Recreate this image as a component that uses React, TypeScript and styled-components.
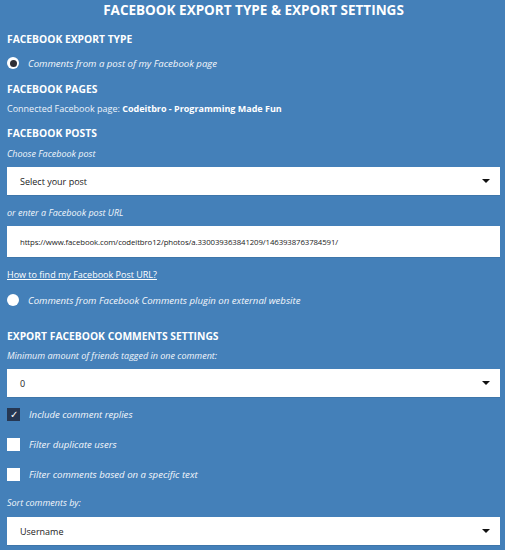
import styled, { createGlobalStyle } from "styled-components";

const GlobalStyle = createGlobalStyle`
	body {
		margin: 0;
		background: #4480b9;
		font-family: "Open Sans", "Noto Sans", sans-serif;
		color: #ffffff;
	}
`;

const Page = styled.div`
	width: 505px;
	height: 550px;
	box-sizing: border-box;
	padding: 0 5px 0 7px;
	background: #4480b9;
	overflow: hidden;
`;

const Title = styled.h1`
	margin: 0;
	height: 21px;
	text-align: center;
	font-size: 13.5px;
	font-weight: 700;
	line-height: 20px;
`;

const SectionTitle = styled.h2<{ $top?: number }>`
	margin: ${(p) => p.$top ?? 0}px 0 0;
	font-size: 10.3px;
	font-weight: 700;
	line-height: 16px;
`;

const Hint = styled.div<{ $top?: number }>`
	margin: ${(p) => p.$top ?? 0}px 0 0;
	font-size: 9px;
	font-style: italic;
	line-height: 16px;
	color: #f2f6fb;
`;

const Text = styled.div`
	margin-top: 4px;
	font-size: 9px;
	line-height: 16px;
	color: #eef3f9;

	b {
		color: #ffffff;
		font-weight: 700;
	}
`;

const OptionRow = styled.label<{ $top?: number }>`
	display: flex;
	align-items: center;
	gap: 9px;
	height: 16px;
	margin-top: ${(p) => p.$top ?? 0}px;
	font-size: 9.6px;
	font-style: italic;
	color: #f4f7fb;
`;

const Radio = styled.span<{ $checked?: boolean }>`
	width: 12px;
	height: 12px;
	border-radius: 50%;
	background: #ffffff;
	display: flex;
	align-items: center;
	justify-content: center;
	flex: 0 0 auto;

	&::after {
		content: "";
		display: ${(p) => (p.$checked ? "block" : "none")};
		width: 7px;
		height: 7px;
		border-radius: 50%;
		background: #2e2e35;
	}
`;

const Box = styled.span<{ $checked?: boolean }>`
	width: 13px;
	height: 13px;
	box-sizing: border-box;
	background: ${(p) => (p.$checked ? "#263752" : "#ffffff")};
	display: flex;
	align-items: center;
	justify-content: center;
	flex: 0 0 auto;
	color: #ffffff;
	font-size: 10px;
	font-style: normal;
`;

const Field = styled.div<{ $top?: number; $height?: number }>`
	display: flex;
	align-items: center;
	justify-content: space-between;
	height: ${(p) => p.$height ?? 28}px;
	margin-top: ${(p) => p.$top ?? 0}px;
	padding: 0 10px 0 13px;
	background: #ffffff;
	color: #222222;
	font-size: 9px;
	box-shadow: 0 1px 0 rgba(0, 0, 0, 0.08);
`;

const UrlText = styled.span`
	font-size: 7.8px;
	letter-spacing: -0.1px;
`;

const Caret = styled.span`
	width: 0;
	height: 0;
	border-left: 4px solid transparent;
	border-right: 4px solid transparent;
	border-top: 4px solid #111111;
`;

const HelpLink = styled.a`
	display: block;
	margin-top: 10px;
	font-size: 9px;
	line-height: 16px;
	color: #ffffff;
	text-decoration: underline;
`;

function Select({ value, top }: { value: string; top?: number }) {
	return (
		<Field $top={top}>
			<span>{value}</span>
			<Caret />
		</Field>
	);
}

export default function App() {
	return (
		<Page>
			<GlobalStyle />
			<Title>FACEBOOK EXPORT TYPE &amp; EXPORT SETTINGS</Title>

			<SectionTitle $top={10}>FACEBOOK EXPORT TYPE</SectionTitle>
			<OptionRow $top={8}>
				<Radio $checked />
				Comments from a post of my Facebook page
			</OptionRow>

			<SectionTitle $top={10}>FACEBOOK PAGES</SectionTitle>
			<Text>
				Connected Facebook page: <b>Codeitbro - Programming Made Fun</b>
			</Text>

			<SectionTitle $top={8}>FACEBOOK POSTS</SectionTitle>
			<Hint $top={5}>Choose Facebook post</Hint>
			<Select value="Select your post" top={5} />

			<Hint $top={10}>or enter a Facebook post URL</Hint>
			<Field $top={5} $height={31}>
				<UrlText>https://www.facebook.com/codeitbro12/photos/a.330039363841209/1463938763784591/</UrlText>
			</Field>

			<HelpLink href="#">How to find my Facebook Post URL?</HelpLink>
			<OptionRow $top={9}>
				<Radio />
				Comments from Facebook Comments plugin on external website
			</OptionRow>

			<SectionTitle $top={20}>EXPORT FACEBOOK COMMENTS SETTINGS</SectionTitle>
			<Hint $top={4}>Minimum amount of friends tagged in one comment:</Hint>
			<Select value="0" top={5} />

			<OptionRow $top={9}>
				<Box $checked>✓</Box>
				Include comment replies
			</OptionRow>
			<OptionRow $top={14}>
				<Box />
				Filter duplicate users
			</OptionRow>
			<OptionRow $top={14}>
				<Box />
				Filter comments based on a specific text
			</OptionRow>

			<Hint $top={13}>Sort comments by:</Hint>
			<Select value="Username" top={6} />
		</Page>
	);
}
